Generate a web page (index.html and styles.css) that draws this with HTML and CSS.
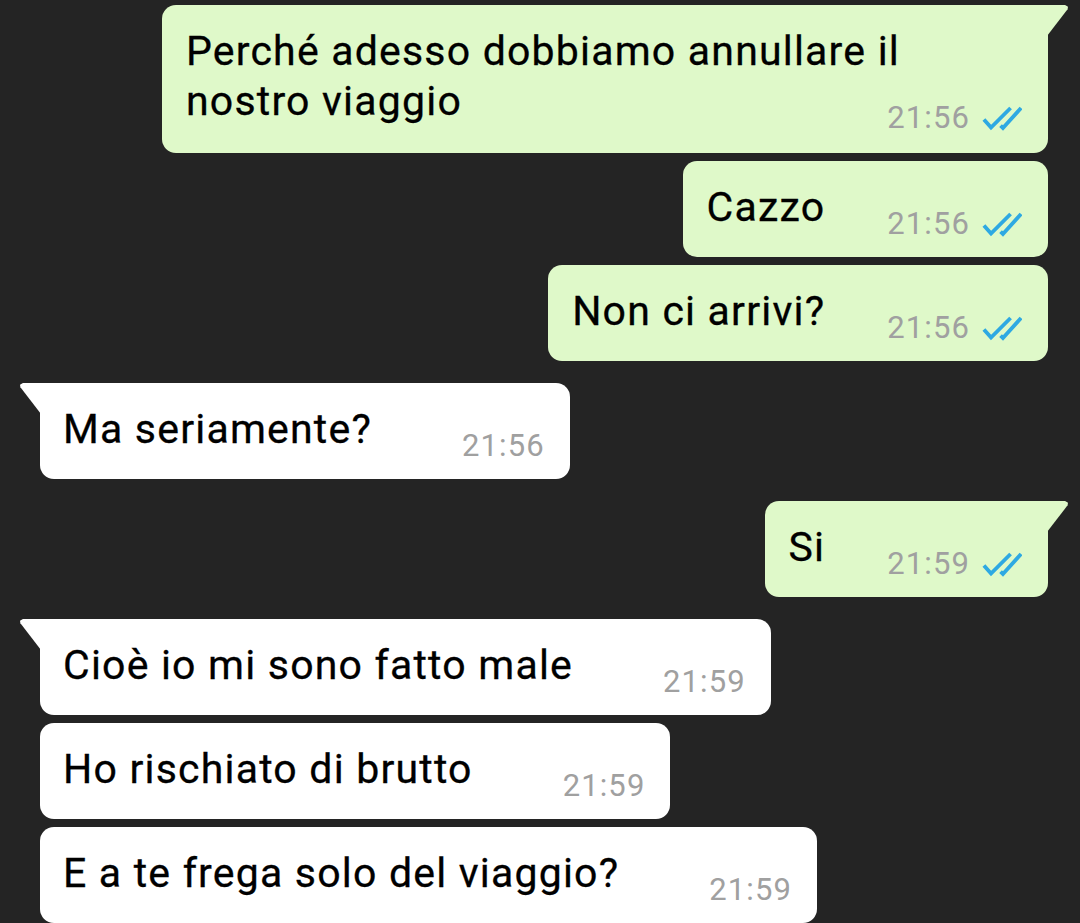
FILE: index.html
```html
<!DOCTYPE html>
<html lang="it">
<head>
<meta charset="utf-8">
<title>Chat</title>
<link rel="stylesheet" href="styles.css">
</head>
<body>
<main class="chat">
  <section class="group group--out">
    <div class="msg msg--out msg--tail msg--wide">
      <p class="text"><span>Perché adesso dobbiamo annullare il</span> <span>nostro viaggio</span></p>
      <div class="meta"><span class="time">21:56</span><svg class="ticks" viewBox="0 0 42 27"><path d="M2 15 L9.5 23.5 L30 3 M19.5 21.5 L22 24 L41 3"/></svg></div>
    </div>
    <div class="msg msg--out">
      <p class="text">Cazzo</p>
      <div class="meta"><span class="time">21:56</span><svg class="ticks" viewBox="0 0 42 27"><path d="M2 15 L9.5 23.5 L30 3 M19.5 21.5 L22 24 L41 3"/></svg></div>
    </div>
    <div class="msg msg--out">
      <p class="text">Non ci arrivi?</p>
      <div class="meta"><span class="time">21:56</span><svg class="ticks" viewBox="0 0 42 27"><path d="M2 15 L9.5 23.5 L30 3 M19.5 21.5 L22 24 L41 3"/></svg></div>
    </div>
  </section>
  <section class="group group--in">
    <div class="msg msg--in msg--tail">
      <p class="text">Ma seriamente?</p>
      <div class="meta"><span class="time">21:56</span></div>
    </div>
  </section>
  <section class="group group--out">
    <div class="msg msg--out msg--tail">
      <p class="text">Si</p>
      <div class="meta"><span class="time">21:59</span><svg class="ticks" viewBox="0 0 42 27"><path d="M2 15 L9.5 23.5 L30 3 M19.5 21.5 L22 24 L41 3"/></svg></div>
    </div>
  </section>
  <section class="group group--in">
    <div class="msg msg--in msg--tail">
      <p class="text">Cioè io mi sono fatto male</p>
      <div class="meta"><span class="time">21:59</span></div>
    </div>
    <div class="msg msg--in">
      <p class="text">Ho rischiato di brutto</p>
      <div class="meta"><span class="time">21:59</span></div>
    </div>
    <div class="msg msg--in">
      <p class="text">E a te frega solo del viaggio?</p>
      <div class="meta"><span class="time">21:59</span></div>
    </div>
  </section>
</main>
</body>
</html>
```
FILE: styles.css
```css
* { box-sizing: border-box; }

html, body {
  margin: 0;
  padding: 0;
  background: #242424;
  height: 100%;
  overflow: hidden;
}

body {
  font-family: Roboto, "Noto Sans", "Liberation Sans", sans-serif;
  color: #000;
}

.chat {
  display: flex;
  flex-direction: column;
  gap: 22px;
  padding: 5px 32px 0 40px;
}

.group {
  display: flex;
  flex-direction: column;
  gap: 8px;
}

.group--out { align-items: flex-end; }
.group--in { align-items: flex-start; }

.msg {
  position: relative;
  display: flex;
  align-items: flex-end;
  width: fit-content;
  border-radius: 14px;
  padding: 21px 26px 16px 24px;
}

.msg--out { background: #dff9c9; }
.msg--in { background: #ffffff; padding-left: 23px; padding-right: 25px; }

.text {
  margin: 0 0 9px 0;
  font-size: 41px;
  line-height: 50px;
  letter-spacing: 1.2px;
  white-space: nowrap;
  -webkit-text-stroke: 0.3px #000;
}

.meta {
  display: flex;
  align-items: center;
  gap: 12px;
  height: 34px;
  flex-shrink: 0;
}

.msg--out .meta { margin-left: 62px; }
.msg--in .meta { margin-left: 90px; }

.time {
  font-size: 31px;
  line-height: 34px;
  letter-spacing: 1.1px;
  color: #a0a0a0;
}

.ticks {
  width: 40px;
  height: 26px;
  fill: none;
  stroke: #2ea9e2;
  stroke-width: 4;
  stroke-linecap: butt;
  stroke-linejoin: miter;
}

/* wide wrapping bubble */
.msg--wide {
  display: block;
  width: 886px;
  padding-bottom: 18px;
}

.msg--wide .text {
  white-space: normal;
  margin-bottom: 0;
}

.msg--wide .meta {
  justify-content: flex-end;
  margin-left: 0;
  margin-top: -25px;
}

/* tails */
.msg--out.msg--tail { border-top-right-radius: 0; }
.msg--in.msg--tail { border-top-left-radius: 0; }

.msg--tail::before {
  content: "";
  position: absolute;
  top: 0;
  width: 21px;
  height: 31px;
  background: inherit;
}

.msg--out.msg--tail::before {
  right: -20px;
  clip-path: polygon(0 0, 86% 0, 100% 6%, 98% 14%, 0 100%);
}

.msg--in.msg--tail::before {
  left: -20px;
  clip-path: polygon(100% 0, 14% 0, 0 6%, 2% 14%, 100% 100%);
}
```
